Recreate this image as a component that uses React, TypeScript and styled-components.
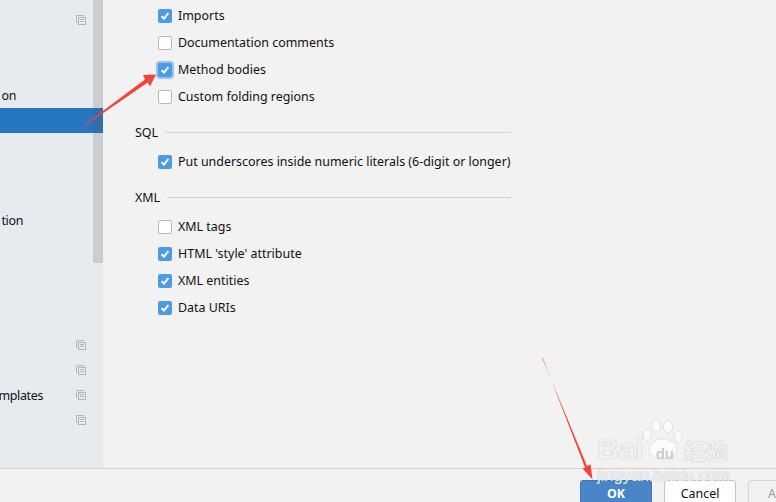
import React from "react";
import styled, { createGlobalStyle } from "styled-components";

const GlobalStyle = createGlobalStyle`
  html, body {
    margin: 0;
    padding: 0;
    background: #f2f2f2;
  }
  body {
    font-family: "Noto Sans", "Open Sans", "Liberation Sans", sans-serif;
    font-size: 12.45px;
    color: #111;
  }
`;

const CopyIcon = () => (
  <svg width="10" height="10" viewBox="0 0 10 10" fill="none" stroke="#aeb6bc" strokeWidth="1">
    <path d="M7.5 1.5V.5H.5V7.5H1.5" />
    <rect x="2.5" y="2.5" width="7" height="7" />
    <path d="M4 4.5H8M4 6.5H8" />
  </svg>
);

const CheckIcon = () => (
  <svg width="14" height="14" viewBox="0 0 14 14" fill="none" stroke="#fff" strokeWidth="2">
    <path d="M3.6 7.2 L6 9.6 L10.4 4" />
  </svg>
);

interface NavItem {
  label?: string;
  labelWidth?: number;
  copy?: boolean;
  selected?: boolean;
}

const navItems: NavItem[] = [
  { copy: true },
  {},
  {},
  { label: "on", labelWidth: 16 },
  { selected: true },
  {},
  {},
  {},
  { label: "tion", labelWidth: 23 },
  {},
  {},
  {},
  {},
  { copy: true },
  { copy: true },
  { label: "mplates", labelWidth: 43, copy: true },
  { copy: true },
];

interface OptionItem {
  label: string;
  checked: boolean;
  focused?: boolean;
}

const kotlinOptions: OptionItem[] = [
  { label: "Imports", checked: true },
  { label: "Documentation comments", checked: false },
  { label: "Method bodies", checked: true, focused: true },
  { label: "Custom folding regions", checked: false },
];

const xmlOptions: OptionItem[] = [
  { label: "XML tags", checked: false },
  { label: "HTML 'style' attribute", checked: true },
  { label: "XML entities", checked: true },
  { label: "Data URIs", checked: true },
];

const Option = ({ label, checked, focused }: OptionItem) => (
  <OptionRow>
    <Checkbox $checked={checked} $focused={focused}>
      {checked && <CheckIcon />}
    </Checkbox>
    <span>{label}</span>
  </OptionRow>
);

const App = () => {
  return (
    <Page>
      <GlobalStyle />
      <Main>
        <Sidebar>
          {navItems.map((item, i) => (
            <NavRow key={i} $selected={item.selected}>
              {item.label && <NavLabel $width={item.labelWidth}>{item.label}</NavLabel>}
              {item.copy && (
                <CopySlot>
                  <CopyIcon />
                </CopySlot>
              )}
            </NavRow>
          ))}
          <Scrollbar />
        </Sidebar>
        <Content>
          <Options>
            {kotlinOptions.map((o) => (
              <Option key={o.label} {...o} />
            ))}
          </Options>
          <Heading>SQL</Heading>
          <Options>
            <Option label="Put underscores inside numeric literals (6-digit or longer)" checked />
          </Options>
          <Heading>XML</Heading>
          <Options>
            {xmlOptions.map((o) => (
              <Option key={o.label} {...o} />
            ))}
          </Options>
        </Content>
      </Main>
      <Footer>
        <PrimaryButton>OK</PrimaryButton>
        <Button>Cancel</Button>
        <GhostButton>A</GhostButton>
      </Footer>

      <Annotations width="776" height="502" viewBox="0 0 776 502">
        <polygon fill="#f4433c" points="84,125 145,79.4 143,75 156,74.5 150,86.5 147.8,82.4 84.6,125.8" />
        <polygon fill="#f4433c" points="542.2,358 587,466 590.6,464.6 592.5,479.5 582.6,468.6 585,467.6 542.8,358" />
        <g fill="#fff" opacity="0.7" stroke="#c4c4c4" strokeWidth="0.6">
          <ellipse cx="647" cy="435" rx="4" ry="5.5" />
          <ellipse cx="656" cy="426" rx="4.5" ry="6" />
          <ellipse cx="668" cy="427" rx="4.5" ry="6" />
          <ellipse cx="678" cy="437" rx="4" ry="5.5" />
          <ellipse cx="663" cy="449" rx="14" ry="10" />
        </g>
      </Annotations>
      <Watermark>
        <WatermarkLogo>
          Bai<WatermarkDu>du</WatermarkDu>
          <WatermarkCn>经验</WatermarkCn>
        </WatermarkLogo>
        <WatermarkUrl>jingyan.baidu.com</WatermarkUrl>
      </Watermark>
    </Page>
  );
};

const Page = styled.div`
  position: relative;
  width: 776px;
  height: 502px;
  overflow: hidden;
  background: #f2f2f2;
  display: flex;
  flex-direction: column;
`;
const Main = styled.div`
  display: flex;
  flex: none;
  height: 468px;
`;
const Sidebar = styled.div`
  position: relative;
  width: 103px;
  flex: none;
  padding-top: 8px;
  box-sizing: border-box;
  background: #e6ebf0;
  overflow: hidden;
`;
const NavRow = styled.div<{ $selected?: boolean }>`
  display: flex;
  align-items: center;
  height: 25px;
  background: ${(props) => (props.$selected ? "#2675bf" : "transparent")};
`;
const NavLabel = styled.span<{ $width?: number }>`
  width: ${(props) => props.$width}px;
  flex: none;
  white-space: nowrap;
  letter-spacing: -0.35px;
  display: flex;
  justify-content: flex-end;
`;
const CopySlot = styled.span`
  display: flex;
  margin-left: auto;
  margin-right: 17px;
  margin-top: -2px;
`;
const Scrollbar = styled.div`
  position: absolute;
  top: 0;
  right: 0;
  width: 10px;
  height: 263px;
  background: rgba(90, 90, 90, 0.2);
`;
const Content = styled.div`
  flex: 1;
  padding: 2px 0 0 32px;
`;
const Options = styled.div`
  display: flex;
  flex-direction: column;
  padding-left: 23px;
  width: 353px;
`;
const OptionRow = styled.label`
  display: flex;
  align-items: center;
  gap: 6px;
  height: 27px;
  white-space: nowrap;
`;
const Checkbox = styled.span<{ $checked: boolean; $focused?: boolean }>`
  width: 14px;
  height: 14px;
  flex: none;
  box-sizing: border-box;
  display: flex;
  border-radius: 2px;
  background: ${(props) => (props.$checked ? "#4e9be5" : "#fff")};
  border: ${(props) => (props.$checked ? "none" : "1px solid #b8b8b8")};
  box-shadow: ${(props) => (props.$focused ? "0 0 0 2px #97c3f3" : "none")};
`;
const Heading = styled.div`
  display: flex;
  align-items: center;
  gap: 7px;
  width: 376px;
  height: 27px;
  margin: 9px 0 2px;
  &::after {
    content: "";
    flex: 1;
    height: 1px;
    background: #d1d1d1;
  }
`;
const Footer = styled.div`
  display: flex;
  gap: 12px;
  flex: 1;
  box-sizing: border-box;
  padding: 11px 0 0 580px;
  border-top: 1px solid #d1d1d1;
`;
const Button = styled.div`
  flex: none;
  width: 72px;
  height: 26px;
  box-sizing: border-box;
  display: flex;
  align-items: center;
  justify-content: center;
  background: #fff;
  border: 1px solid #c4c4c4;
  border-radius: 3px;
`;
const PrimaryButton = styled(Button)`
  background: #4a86c7;
  border-color: #3f77b5;
  color: #fff;
  font-weight: 700;
`;
const GhostButton = styled(Button)`
  background: #f2f2f2;
  border-color: #d4d4d4;
  color: #9a9a9a;
  justify-content: flex-start;
  padding-left: 19px;
`;
const Annotations = styled.svg`
  position: absolute;
  inset: 0;
  pointer-events: none;
`;
const Watermark = styled.div`
  position: absolute;
  left: 597px;
  top: 432px;
  width: 140px;
  color: rgba(255, 255, 255, 0.85);
  text-shadow: 0 0 1px rgba(130, 130, 130, 0.7);
  font-family: "Liberation Sans", "Noto Sans CJK SC", sans-serif;
`;
const WatermarkLogo = styled.div`
  display: flex;
  align-items: baseline;
  height: 34px;
  font-size: 30px;
  font-weight: 700;
  line-height: 34px;
`;
const WatermarkDu = styled.span`
  margin-left: 12px;
  font-size: 15px;
  color: rgba(200, 200, 200, 0.95);
  text-shadow: none;
`;
const WatermarkCn = styled.span`
  margin-left: 10px;
  font-size: 22px;
`;
const WatermarkUrl = styled.div`
  font-size: 16.5px;
  line-height: 14px;
  margin-top: 2px;
  white-space: nowrap;
`;

export default App;
